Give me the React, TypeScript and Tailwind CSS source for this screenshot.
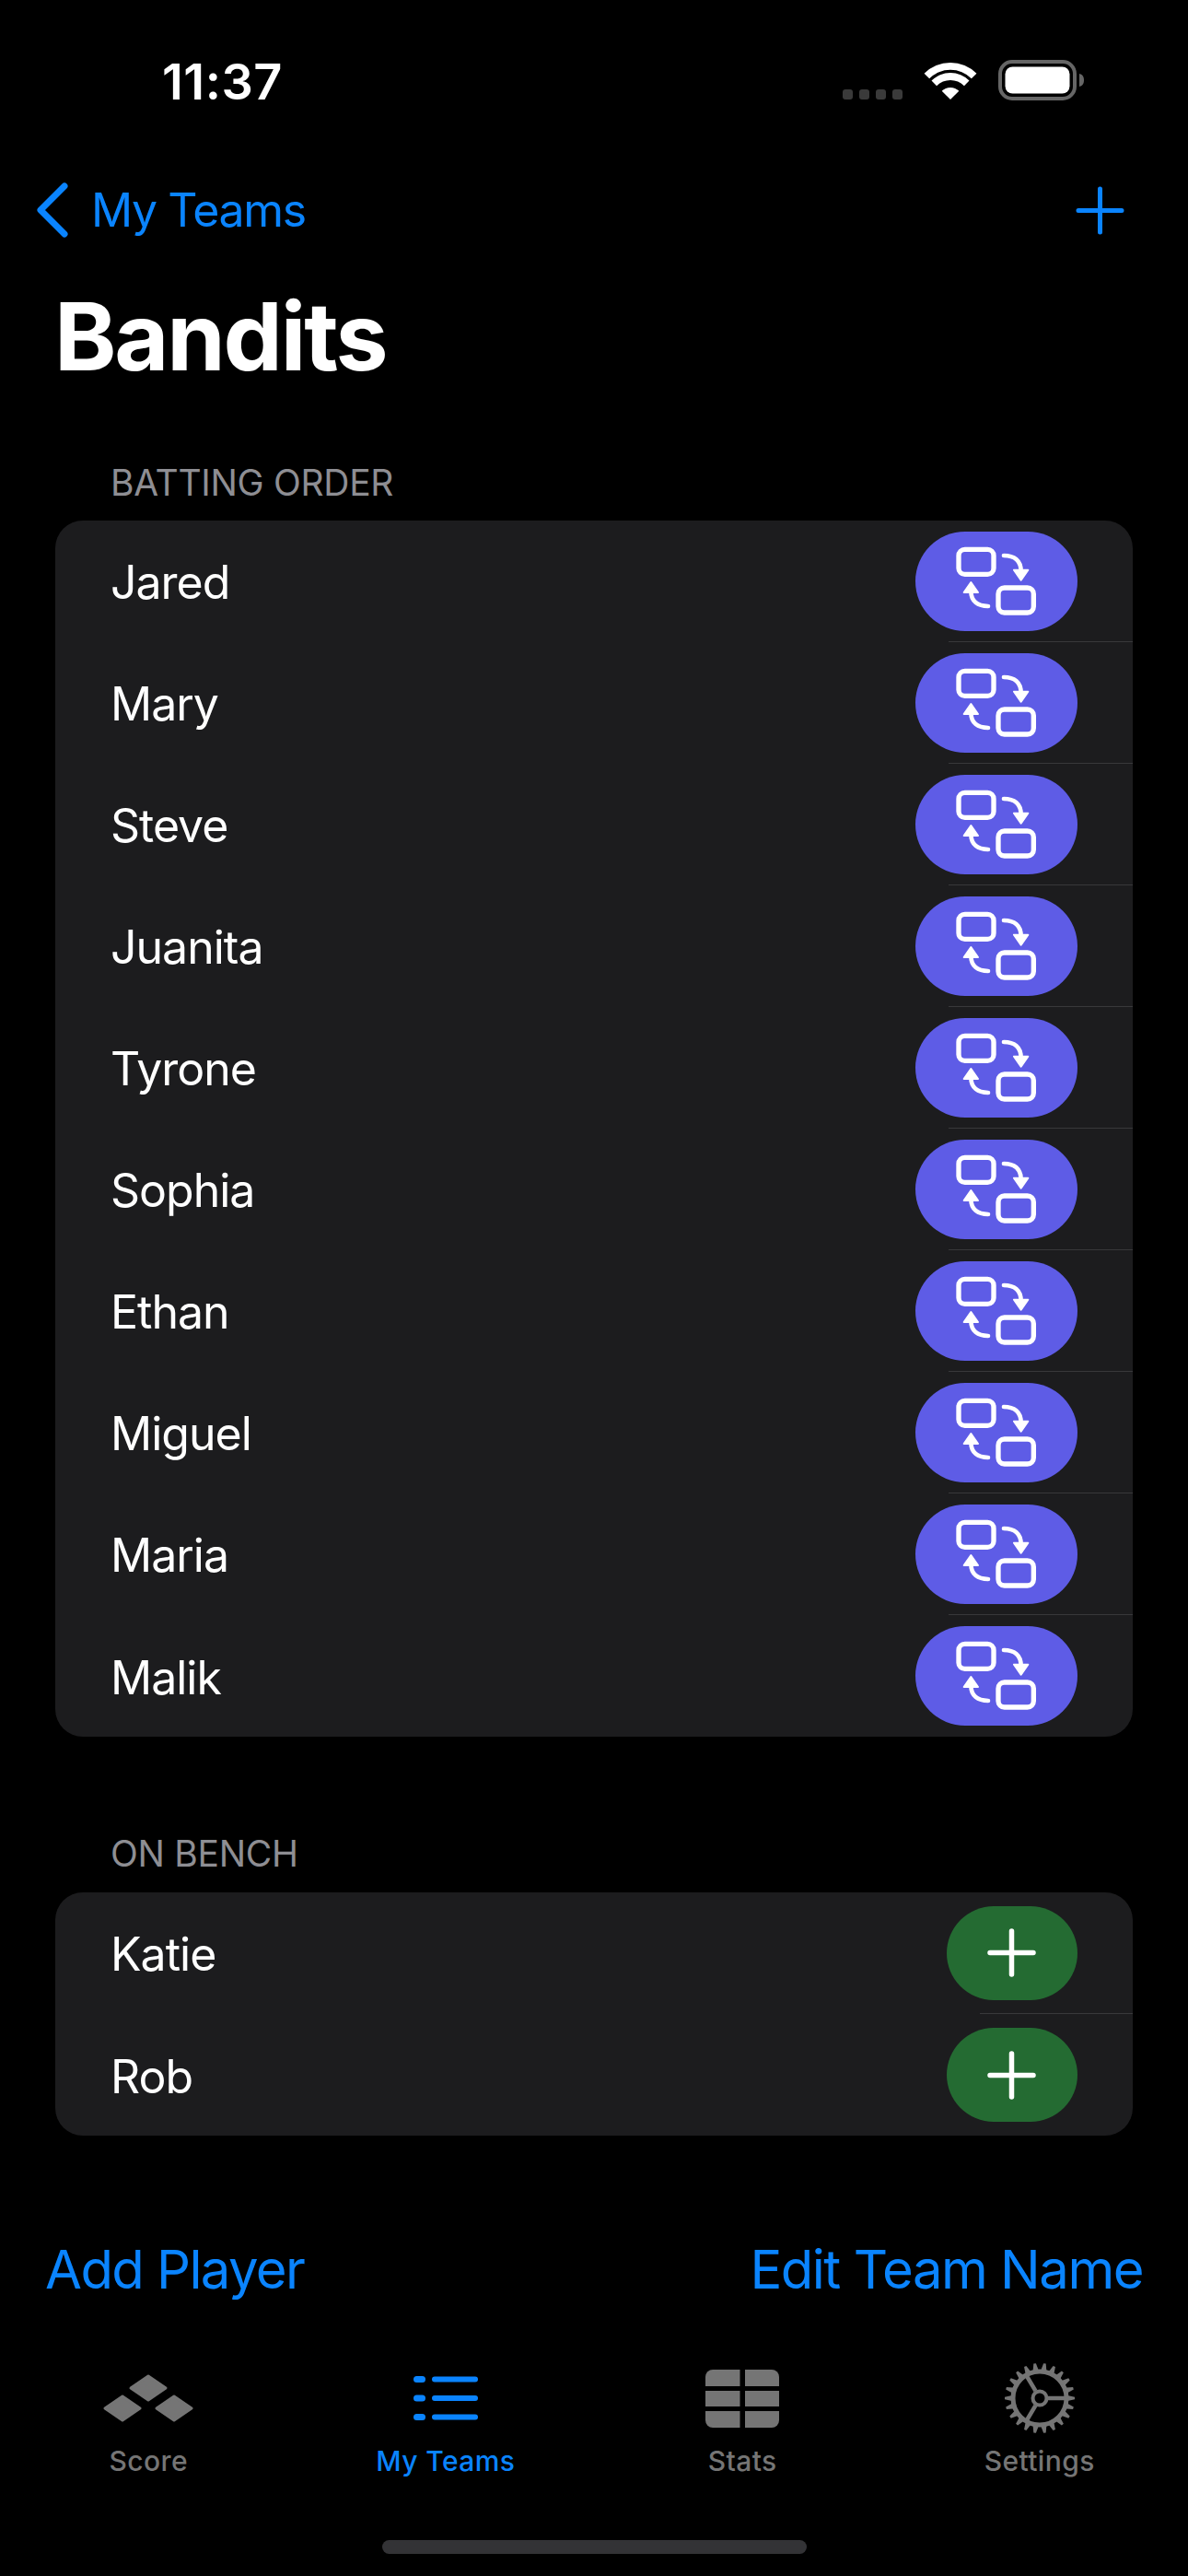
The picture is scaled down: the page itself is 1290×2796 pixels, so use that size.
const batting = ["Jared", "Mary", "Steve", "Juanita", "Tyrone", "Sophia", "Ethan", "Miguel", "Maria", "Malik"];
const bench = ["Katie", "Rob"];

function SwapIcon() {
  return (
    <svg width="90" height="76" viewBox="290 100 270 228" fill="none" stroke="#fff">
      <rect x="302" y="110" width="114" height="81" rx="20" strokeWidth="16" />
      <rect x="431" y="235" width="115" height="81" rx="20" strokeWidth="16" />
      <path d="M449 130 C482 130 505 145 505 182" strokeWidth="14" strokeLinecap="round" />
      <path d="M482 177 H528 L505 210 Z" fill="#fff" strokeWidth="6" strokeLinejoin="round" />
      <path d="M398 295 C365 295 342 280 342 245" strokeWidth="14" strokeLinecap="round" />
      <path d="M319 250 H365 L342 217 Z" fill="#fff" strokeWidth="6" strokeLinejoin="round" />
    </svg>
  );
}

function Plus({ size, width, color }: { size: number; width: number; color: string }) {
  return (
    <svg width={size} height={size} viewBox="0 0 53 53" fill="none" stroke={color} strokeWidth={width} strokeLinecap="round">
      <path d="M26.5 3 V50 M3 26.5 H50" />
    </svg>
  );
}

function Row({ name, kind, last }: { name: string; kind: "swap" | "add"; last: boolean }) {
  return (
    <>
      <div className={`flex items-center justify-between pl-[60px] pr-[60px] ${last ? "h-[132px]" : "h-[131px]"}`}>
        <span className="pt-[3px] text-[50px] leading-[60px] text-white tracking-[-1px]">{name}</span>
        {kind === "swap" ? (
          <div className="flex h-[108px] w-[176px] items-center justify-center rounded-full bg-[#5e5ce6]">
            <SwapIcon />
          </div>
        ) : (
          <div className="flex h-[102px] w-[142px] items-center justify-center rounded-full bg-[#246b32]">
            <div className="-ml-[2px]">
              <Plus size={53} width={5.5} color="#fff" />
            </div>
          </div>
        )}
      </div>
      {!last && <div className={`ml-auto h-px bg-[#38383a] ${kind === "swap" ? "w-[200px]" : "w-[166px]"}`} />}
    </>
  );
}

function SectionLabel({ children }: { children: string }) {
  return <div className="pl-[120px] text-[39px] leading-[40px] text-[#8e8e93] tracking-[-0.3px]">{children}</div>;
}

function ScoreIcon() {
  return (
    <svg width="98" height="52" viewBox="0 0 98 52" fill="#757575" stroke="#757575" strokeWidth="3" strokeLinejoin="round">
      <path d="M49 2 L68 15 L49 28 L30 15 Z" />
      <path d="M21 24 L40 37 L21 50 L2 37 Z" />
      <path d="M77 24 L96 37 L77 50 L58 37 Z" />
    </svg>
  );
}

function ListIcon() {
  return (
    <svg width="70" height="48" viewBox="0 0 70 48" fill="#0a84ff">
      <rect x="0" y="0" width="13" height="7" rx="3.5" />
      <rect x="20" y="0.5" width="50" height="6" rx="3" />
      <rect x="0" y="20.5" width="13" height="7" rx="3.5" />
      <rect x="20" y="21" width="50" height="6" rx="3" />
      <rect x="0" y="41" width="13" height="7" rx="3.5" />
      <rect x="20" y="41.5" width="50" height="6" rx="3" />
    </svg>
  );
}

function StatsIcon() {
  return (
    <svg width="80" height="63" viewBox="0 0 80 63" fill="#757575">
      <path d="M8 0 H37.5 V18 H0 V8 A8 8 0 0 1 8 0 Z" />
      <path d="M43 0 H72 A8 8 0 0 1 80 8 V18 H43 Z" />
      <rect x="0" y="23" width="37.5" height="17" />
      <rect x="43" y="23" width="37" height="17" />
      <path d="M0 45 H37.5 V63 H8 A8 8 0 0 1 0 55 Z" />
      <path d="M43 45 H80 V55 A8 8 0 0 1 72 63 H43 Z" />
    </svg>
  );
}

function GearIcon() {
  const teeth = Array.from({ length: 22 }, (_, i) => (i * 360) / 22);
  return (
    <svg width="78" height="78" viewBox="-39 -39 78 78" fill="none" stroke="#757575">
      <circle r="29" strokeWidth="5" />
      {teeth.map((a) => (
        <path key={a} d="M28 -3.6 L38 -1.3 V1.3 L28 3.6 Z" fill="#757575" stroke="none" transform={`rotate(${a})`} />
      ))}
      <circle r="7.5" strokeWidth="4" />
      <path d="M9 0 H28 M-4.5 -7.8 L-15 -25.5 M-4.5 7.8 L-15 25.5" strokeWidth="4.5" />
    </svg>
  );
}

function Tab({ label, active, icon }: { label: string; active?: boolean; icon: React.ReactNode }) {
  return (
    <div className="flex flex-col items-center">
      <div className="flex h-[78px] items-center justify-center">{icon}</div>
      <span className={`mt-[11px] text-[30px] leading-[36px] font-medium tracking-[0.4px] ${active ? "text-[#0a84ff]" : "text-[#757575]"}`}>
        {label}
      </span>
    </div>
  );
}

export default function App() {
  return (
    <div className="flex h-[2796px] w-[1290px] flex-col overflow-hidden bg-black font-['Inter','Liberation_Sans',sans-serif]">
      {/* Status bar */}
      <div className="flex h-[198px] items-start justify-between pt-[57px] pl-[176px] pr-[112px]">
        <span className="text-[54px] leading-[64px] font-semibold text-white tracking-[0.5px]">11:37</span>
        <div className="-mt-[2px] flex items-end gap-[23px] pt-[10px]">
          <div className="mb-px flex gap-[7px]">
            <div className="h-[11px] w-[11px] rounded-[3px] bg-[#3a3a3a]" />
            <div className="h-[11px] w-[11px] rounded-[3px] bg-[#3a3a3a]" />
            <div className="h-[11px] w-[11px] rounded-[3px] bg-[#3a3a3a]" />
            <div className="h-[11px] w-[11px] rounded-[3px] bg-[#3a3a3a]" />
          </div>
          <svg width="58" height="42" viewBox="370 76 176 126" fill="#fff">
            <path d="M371.7 113.7 A122 122 0 0 1 544.3 113.7 L527.3 130.7 A98 98 0 0 0 388.7 130.7 Z" />
            <path d="M395.8 137.8 A88 88 0 0 1 520.2 137.8 L503.3 154.7 A64 64 0 0 0 412.7 154.7 Z" />
            <path d="M429.7 171.7 A40 40 0 0 1 486.3 171.7 L458 200 Z" />
          </svg>
          <svg width="94" height="44" viewBox="0 0 94 44">
            <rect x="2" y="2" width="81" height="40" rx="13" fill="none" stroke="#666" strokeWidth="4" />
            <rect x="7.5" y="7.5" width="70" height="29" rx="8" fill="#fff" />
            <path d="M88 15 C92 16 93 19 93 22 C93 25 92 28 88 29 Z" fill="#666" />
          </svg>
        </div>
      </div>

      {/* Nav */}
      <div className="flex h-[60px] items-center justify-between pl-[37px] pr-[69px]">
        <div className="flex items-center gap-[24px]">
          <svg width="38" height="60" viewBox="0 0 38 60" fill="none" stroke="#0a84ff" strokeWidth="7" strokeLinecap="round" strokeLinejoin="round">
            <path d="M33 4 L7 30 L33 56" />
          </svg>
          <span className="text-[50px] leading-[60px] text-[#0a84ff] tracking-[-1.4px]">My Teams</span>
        </div>
        <Plus size={53} width={5} color="#0a84ff" />
      </div>

      {/* Title */}
      <h1 className="mt-[52px] pl-[59px] text-[102px] leading-[110px] font-bold text-white tracking-[-2.2px]">Bandits</h1>

      {/* Batting order */}
      <div className="mt-[84px] mb-[21px]">
        <SectionLabel>BATTING ORDER</SectionLabel>
      </div>
      <div className="mx-[60px] overflow-hidden rounded-[30px] bg-[#1c1c1e]">
        {batting.map((n, i) => (
          <Row key={n} name={n} kind="swap" last={i === batting.length - 1} />
        ))}
      </div>

      {/* Bench */}
      <div className="mt-[107px] mb-[22px]">
        <SectionLabel>ON BENCH</SectionLabel>
      </div>
      <div className="mx-[60px] overflow-hidden rounded-[30px] bg-[#1c1c1e]">
        {bench.map((n, i) => (
          <Row key={n} name={n} kind="add" last={i === bench.length - 1} />
        ))}
      </div>

      {/* Actions */}
      <div className="mt-[110px] flex items-center justify-between pl-[49px] pr-[49px]">
        <span className="text-[58px] leading-[70px] text-[#0a84ff] tracking-[-1.6px]">Add Player</span>
        <span className="text-[58px] leading-[70px] text-[#0a84ff] tracking-[-1.5px]">Edit Team Name</span>
      </div>

      {/* Tab bar */}
      <div className="mt-[66px] grid grid-cols-4">
        <Tab label="Score" icon={<ScoreIcon />} />
        <Tab label="My Teams" active icon={<ListIcon />} />
        <Tab label="Stats" icon={<StatsIcon />} />
        <Tab label="Settings" icon={<GearIcon />} />
      </div>

      {/* Home indicator */}
      <div className="mx-auto mt-[68px] h-[15px] w-[461px] rounded-full bg-[#333336]" />
    </div>
  );
}
